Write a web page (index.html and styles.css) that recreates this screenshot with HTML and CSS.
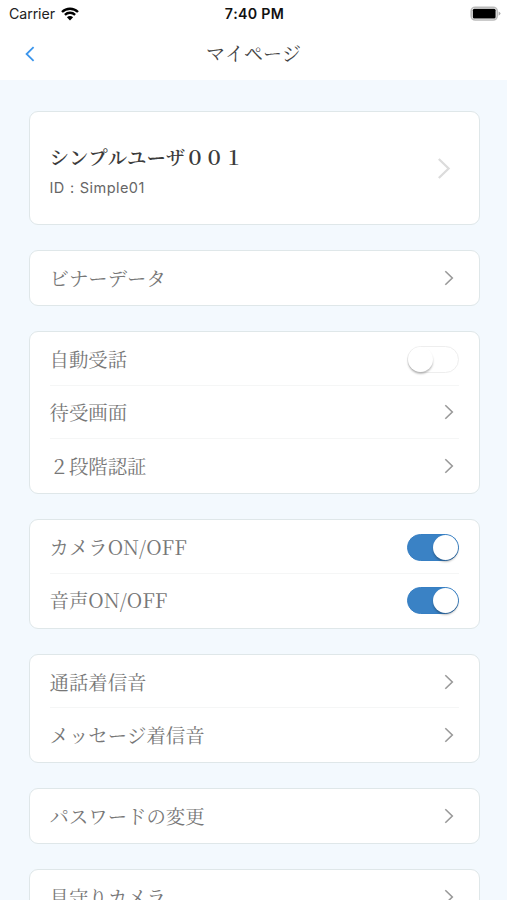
FILE: index.html
```html
<!DOCTYPE html>
<html lang="ja">
<head>
<meta charset="UTF-8">
<title>マイページ</title>
<link rel="stylesheet" href="styles.css">
</head>
<body>
<svg width="0" height="0" class="defs">
	<symbol id="arrow" viewBox="0 0 10 16"><path d="M1.3 1.2 L8.3 8 L1.3 14.8"/></symbol>
</svg>
<header>
	<div class="status">
		<div class="carrier">
			<span>Carrier</span>
			<svg class="wifi" width="18" height="14" viewBox="0 0 18 14">
				<path d="M1 5 C5.5 .7 12.5 .7 17 5"/>
				<path d="M3.9 7.8 C6.8 5.1 11.2 5.1 14.1 7.8"/>
				<path class="dot" d="M9 13.6 L5.9 10.3 C7.7 8.7 10.3 8.7 12.1 10.3 Z"/>
			</svg>
		</div>
		<div class="time">7:40 PM</div>
		<svg class="battery" width="32" height="16" viewBox="0 0 32 16">
			<rect class="shell" x="1.2" y="1.2" width="26" height="12.8" rx="4"/>
			<rect x="2.8" y="2.8" width="22.8" height="9.6" rx="1.5"/>
			<path class="tip" d="M28.6 5.4 Q32.4 7.6 28.6 9.8 Z"/>
		</svg>
	</div>
	<nav>
		<svg class="back" width="10" height="16" viewBox="0 0 10 16"><path d="M8.6 1.2 L1.6 8 L8.6 14.8"/></svg>
		<h1>マイページ</h1>
	</nav>
</header>
<main>
	<section class="card profile">
		<div>
			<div class="name">シンプルユーザ００１</div>
			<div class="id">ID<span class="colon">:</span>Simple01</div>
		</div>
		<svg class="arrow big"><use href="#arrow"/></svg>
	</section>
	<section class="card">
		<div class="row"><span>ビナーデータ</span><svg class="arrow"><use href="#arrow"/></svg></div>
	</section>
	<section class="card">
		<div class="row"><span>自動受話</span><i class="switch"></i></div>
		<div class="row"><span>待受画面</span><svg class="arrow"><use href="#arrow"/></svg></div>
		<div class="row"><span>２段階認証</span><svg class="arrow"><use href="#arrow"/></svg></div>
	</section>
	<section class="card">
		<div class="row"><span>カメラ<span class="latin">ON/OFF</span></span><i class="switch on"></i></div>
		<div class="row"><span>音声<span class="latin">ON/OFF</span></span><i class="switch on"></i></div>
	</section>
	<section class="card">
		<div class="row"><span>通話着信音</span><svg class="arrow"><use href="#arrow"/></svg></div>
		<div class="row"><span>メッセージ着信音</span><svg class="arrow"><use href="#arrow"/></svg></div>
	</section>
	<section class="card">
		<div class="row"><span>パスワードの変更</span><svg class="arrow"><use href="#arrow"/></svg></div>
	</section>
	<section class="card">
		<div class="row"><span>見守りカメラ</span><svg class="arrow"><use href="#arrow"/></svg></div>
	</section>
</main>
</body>
</html>
```
FILE: styles.css
```css
* {
	box-sizing: border-box;
}
body {
	margin: 0;
	height: 900px;
	overflow: hidden;
	background: #f3f9fe;
	font-family: 'Noto Serif CJK JP', 'Noto Sans CJK JP', serif;
	font-size: 19.4px;
	font-weight: 400;
	font-kerning: none;
	color: #777;
}
.defs {
	display: block;
}
svg {
	flex: none;
	fill: none;
}
header {
	height: 80px;
	background: #fff;
}
.status {
	display: grid;
	grid-template-columns: 1fr auto 1fr;
	align-items: center;
	height: 27px;
	padding: 0 5px 0 9px;
	font-family: Inter, sans-serif;
	font-size: 14.2px;
	color: #222;
}
.carrier {
	display: flex;
	align-items: center;
	gap: 6px;
	font-weight: 400;
}
.wifi {
	stroke: #000;
	stroke-width: 2.4;
}
.wifi .dot {
	fill: #000;
	stroke: none;
}
.time {
	font-weight: 600;
	letter-spacing: .3px;
	margin-left: -2px;
	color: #111;
}
.battery {
	justify-self: end;
	fill: #000;
}
.shell {
	fill: none;
	stroke: #bbb;
	stroke-width: 1.6;
}
.tip {
	fill: #aaa;
}
nav {
	display: grid;
	grid-template-columns: 1fr auto 1fr;
	align-items: center;
	height: 53px;
	padding: 0 25px;
}
.back {
	stroke: #3b95ec;
	stroke-width: 1.8;
}
h1 {
	margin: -1px 0 0;
	font-size: 19px;
	font-weight: 400;
	line-height: 28px;
	color: #444;
}
main {
	display: flex;
	flex-direction: column;
	gap: 25px;
	padding: 31px 27.5px 0 28.5px;
}
.card {
	flex: none;
	padding: 0 20px 1.27px;
	border: 1px solid #dfe7e9;
	border-radius: 9px;
	background: #fff;
}
.profile {
	display: flex;
	align-items: center;
	justify-content: space-between;
	height: 114.3px;
	padding-right: 28px;
}
.name {
	padding-top: 8px;
	font-weight: 600;
	line-height: 30px;
	color: #3c3c3c;
}
.id {
	padding-top: 2px;
	font-family: Inter, sans-serif;
	font-size: 14.5px;
	font-weight: 400;
	letter-spacing: .45px;
	line-height: 28px;
	color: #666;
}
.colon {
	display: inline-block;
	width: 15px;
	text-align: center;
}
.row {
	display: flex;
	align-items: center;
	justify-content: space-between;
	height: 52.5px;
	padding-top: 1.5px;
	line-height: 28px;
}
.row > span {
	margin-top: -.6px;
}
.row + .row {
	height: 53.77px;
	padding-top: 1px;
	border-top: 1px solid #f5f6f6;
}
.latin {
	font-size: 20.1px;
}
.arrow {
	width: 10px;
	height: 16px;
	margin-right: 5px;
	stroke: #999;
	stroke-width: 1.6;
}
.arrow.big {
	width: 14px;
	height: 23px;
	margin: 2px 0 0;
	stroke: #dcdcdc;
}
.switch {
	display: flex;
	width: 52px;
	height: 27px;
	border: 1px solid #eee;
	border-radius: 14px;
	background: #fff;
}
.switch::before {
	content: '';
	width: 25px;
	height: 25px;
	border-radius: 50%;
	background: #fff;
	box-shadow: 0 2px 2px rgba(0, 0, 0, .25);
}
.switch.on {
	justify-content: flex-end;
	border-color: #377fc3;
	background: #3a82c5;
}
```
